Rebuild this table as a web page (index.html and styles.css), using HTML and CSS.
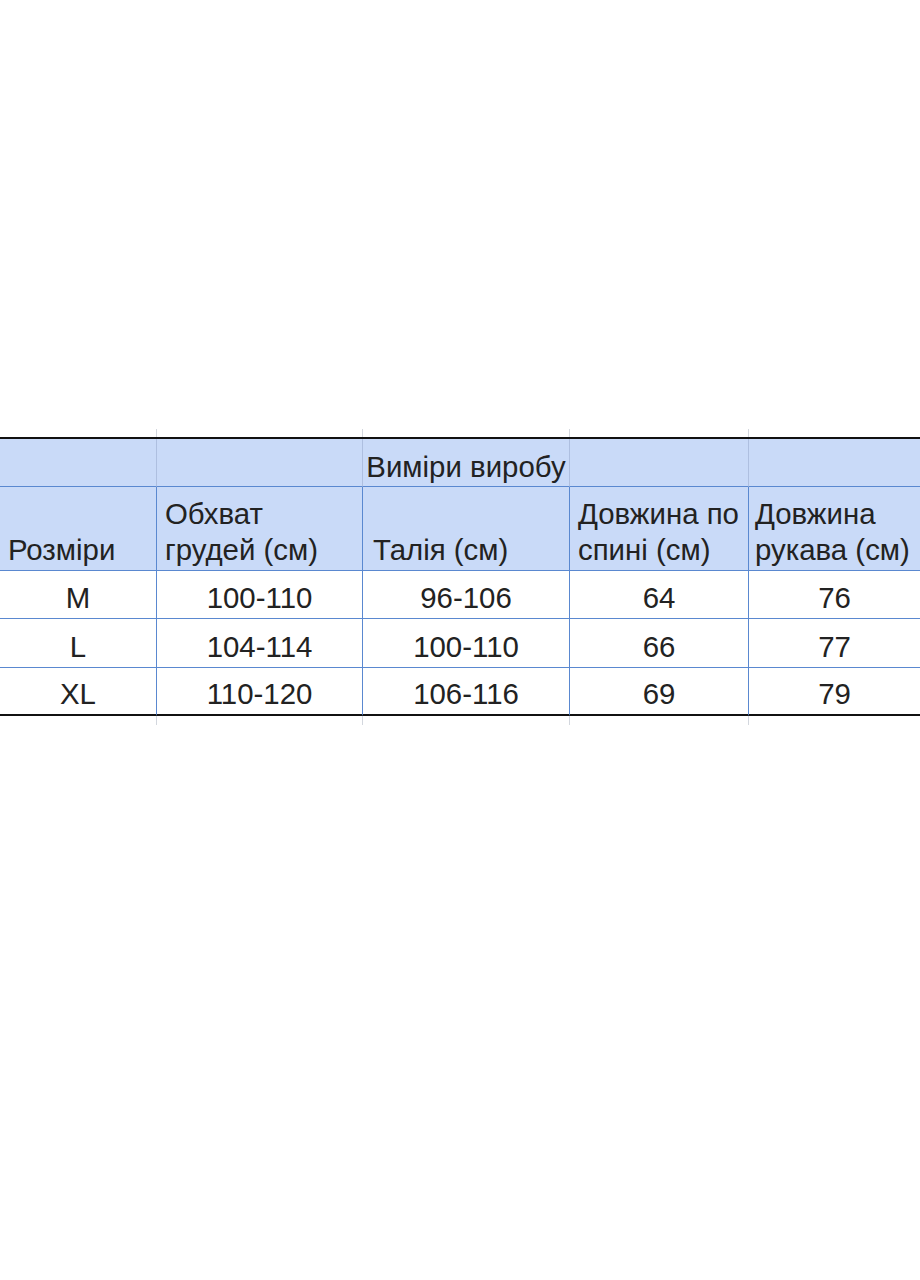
FILE: index.html
```html
<!DOCTYPE html>
<html lang="uk">
<head>
<meta charset="utf-8">
<title>Виміри виробу</title>
<link rel="stylesheet" href="styles.css">
</head>
<body>
<div class="sheet">
  <div class="row stubs">
    <div class="cell"></div><div class="cell"></div><div class="cell"></div><div class="cell"></div><div class="cell last"></div>
  </div>
  <div class="table">
    <div class="row r1">
      <div class="cell"></div>
      <div class="cell"></div>
      <div class="cell center">Виміри виробу</div>
      <div class="cell"></div>
      <div class="cell last"></div>
    </div>
    <div class="row r2">
      <div class="cell">Розміри</div>
      <div class="cell">Обхват<br>грудей (см)</div>
      <div class="cell indent">Талія (см)</div>
      <div class="cell">Довжина по<br>спині (см)</div>
      <div class="cell last tight">Довжина<br>рукава (см)</div>
    </div>
    <div class="row data">
      <div class="cell center">M</div>
      <div class="cell center">100-110</div>
      <div class="cell center">96-106</div>
      <div class="cell center">64</div>
      <div class="cell center last">76</div>
    </div>
    <div class="row data mid">
      <div class="cell center">L</div>
      <div class="cell center">104-114</div>
      <div class="cell center">100-110</div>
      <div class="cell center">66</div>
      <div class="cell center last">77</div>
    </div>
    <div class="row data end">
      <div class="cell center">XL</div>
      <div class="cell center">110-120</div>
      <div class="cell center">106-116</div>
      <div class="cell center">69</div>
      <div class="cell center last">79</div>
    </div>
  </div>
  <div class="row stubs bottom">
    <div class="cell"></div><div class="cell"></div><div class="cell"></div><div class="cell"></div><div class="cell last"></div>
  </div>
</div>
</body>
</html>
```
FILE: styles.css
```css
html, body {
  margin: 0;
  padding: 0;
  background: #ffffff;
}

body {
  width: 920px;
  height: 1280px;
  overflow: hidden;
  font-family: "Liberation Sans", Arial, sans-serif;
  color: #222222;
}

.sheet {
  padding-top: 429px;
}

.row {
  display: grid;
  grid-template-columns: 157px 206px 207px 179px 171px;
}

.cell {
  box-sizing: border-box;
  border-right: 1px solid #5a88d0;
  border-bottom: 1px solid #5a88d0;
  display: flex;
  align-items: flex-end;
  justify-content: flex-start;
  padding: 0 2px 2px 8px;
  font-size: 29.4px;
  line-height: 36px;
  white-space: nowrap;
}

.cell.last {
  border-right: none;
}

.cell.center {
  justify-content: center;
  padding-left: 0;
  padding-right: 0;
}

.cell.indent {
  padding-left: 10px;
}

.cell.tight {
  padding-left: 6px;
}

.stubs {
  height: 8px;
}

.stubs .cell {
  border-bottom: none;
  border-right-color: #d3d7de;
  height: 8px;
  padding: 0;
}

.stubs.bottom {
  height: 9px;
}

.stubs.bottom .cell {
  height: 9px;
}

.table {
  border-top: 2px solid #111111;
}

.r1 .cell {
  height: 48px;
  background: #c9daf8;
  border-right-color: #aebfe0;
  padding-bottom: 1px;
}

.r1 .cell.last {
  border-right: none;
}

.r2 .cell {
  height: 84px;
  background: #c9daf8;
}

.data .cell {
  height: 48px;
}

.data.mid .cell {
  height: 49px;
}

.data.end .cell {
  border-bottom: 2px solid #111111;
}
```
